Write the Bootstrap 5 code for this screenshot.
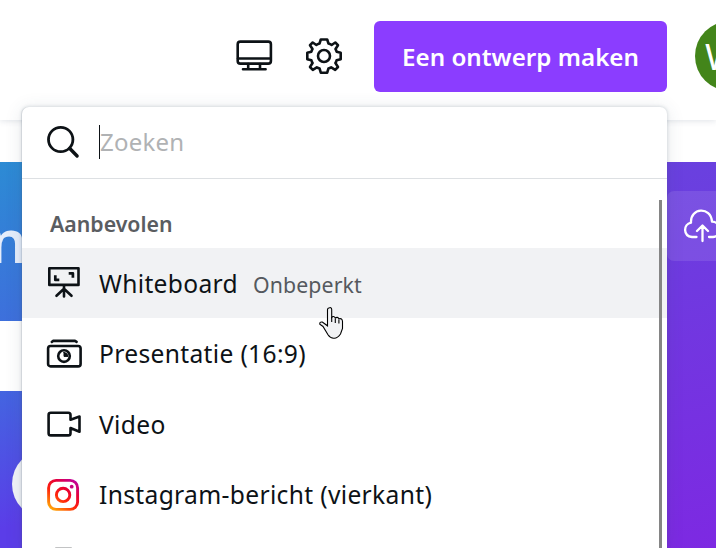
<!DOCTYPE html>
<html lang="nl">
<head>
<meta charset="utf-8">
<meta name="viewport" content="width=device-width, initial-scale=1">
<title>Een ontwerp maken</title>
<link href="https://cdn.jsdelivr.net/npm/bootstrap@5.3.0/dist/css/bootstrap.min.css" rel="stylesheet">
<style>
body{font-family:"Noto Sans",sans-serif;color:#0d1216;width:716px;height:548px;line-height:1.4}
svg{display:block;flex:none;overflow:visible}
.ico{fill:none;stroke:#0d1216;stroke-width:2.6;stroke-linecap:round;stroke-linejoin:round}
.topbar{height:120px;padding:21px 0 28px 236px;box-shadow:0 1px 6px rgba(64,79,109,.16);z-index:1}
.tools{gap:33px;width:138px;height:70px}
.create{width:293px;height:71px;background:#8b3dff;border-radius:6px;font-size:24.2px;font-weight:600;color:#fff;white-space:nowrap;padding:2px 0 0}
.create:hover{background:#8b3dff;color:#fff}
.avatar{width:70px;height:70px;margin-left:28px;background:#43851a;color:#fff;font-size:37px;padding-left:10px}
.stage{height:428px;padding-top:42px}
.leftcol{width:22px}
.banner{height:159px;background:linear-gradient(170deg,#2c8bd4,#3e6fdc);color:#e5edfb;font-size:59px;font-weight:600;line-height:1;padding-top:49px}
.banner span{margin-right:-5px}
.hero{height:157px;margin-top:70px;padding:58px 0 0 12px;background:linear-gradient(165deg,#4365e0,#5b3de8 85%)}
.disc{width:70px;height:70px;background:#f1f3f8}
.rightcol{width:49px;padding-top:29px;background:linear-gradient(165deg,#6941df,#7d29e2)}
.upload{height:70px;padding-left:17px;background:rgba(255,255,255,.1);border-radius:7px 0 0 7px}
.panel{left:22px;top:107px;width:645px;height:441px;border-radius:7px 7px 0 0;z-index:3;box-shadow:-1px 0 0 rgba(64,87,109,.1),0 0 3px 1px rgba(64,87,109,.15),0 2px 18px rgba(57,76,96,.13)}
.search{height:72px;padding-left:25px;border-bottom:1px solid #dde0e3}
.field{height:34px;border-left:1px solid #0d1216;margin-left:19px;margin-top:-2px;font-size:24px;letter-spacing:.2px;color:#b0b2b4}
.heading{height:69px;padding:30px 0 0 28px;font-size:21.3px;font-weight:600;color:#5a5d61}
.item{height:70.5px;padding:2px 0 0 25px;font-size:24.6px;letter-spacing:.33px;white-space:nowrap}
.item svg{width:34px;margin-right:18px}
.item.active-row{height:70px;background:#f1f2f4}
.item.active-row svg{margin-top:-2px}
.hint{font-size:21.3px;color:#55595e;margin-left:15px;padding-top:2px;letter-spacing:.1px}
.scroll{left:637px;top:93px;width:3px;height:348px;background:#858585}
.pointer{left:319px;top:307px;z-index:4}
</style>
</head>
<body class="overflow-hidden bg-white position-relative">
<header class="topbar d-flex position-relative bg-white overflow-x-clip">
  <div class="tools d-flex align-items-center flex-shrink-0">
    <svg class="ico" width="37" height="36" viewBox="0 0 37 36"><rect x="1.7" y="3.6" width="33.2" height="22" rx="2.7"/><path d="M2 20.5h32.6M12.2 26v5M24 26v5M7 31.2h22.6"/></svg>
    <svg class="ico" width="36" height="36" viewBox="-18 -18 36 36"><path d="M-3.2-16.5H3.2L4.5-12.4Q6.3-11.8 7.6-11L11.3-13.5 14-10.8 11.5-7Q12.2-5.8 12.6-4.3L16.7-3.2V3.2L12.6 4.3Q12.2 5.8 11.4 7L14 11 11.2 13.8 7.2 11.4Q5.9 12.2 4.4 12.6L3.2 16.7H-3.2L-4.4 12.6Q-5.9 12.2-7.2 11.4L-11.2 13.8-14 11-11.4 7Q-12.2 5.8-12.6 4.3L-16.7 3.2V-3.2L-12.6-4.3Q-12.2-5.8-11.5-7L-14-10.8-11.3-13.5-7.6-11Q-6.3-11.8-4.5-12.4Z"/><circle r="6"/></svg>
  </div>
  <button class="btn border-0 create flex-shrink-0">Een ontwerp maken</button>
  <div class="avatar rounded-circle flex-shrink-0 d-flex align-items-center">W</div>
</header>
<main class="stage d-flex justify-content-between">
  <div class="leftcol overflow-hidden">
    <div class="banner d-flex justify-content-end"><span>n</span></div>
    <div class="hero"><div class="disc rounded-circle"></div></div>
  </div>
  <div class="rightcol overflow-hidden">
    <div class="upload d-flex align-items-center">
      <svg width="36" height="34" viewBox="0 0 36 34" fill="none" stroke="#fff" stroke-width="2.3" stroke-linecap="round" stroke-linejoin="round"><path d="M12.5 28H8C-1 27-1 15.5 7 13.7 6-1.5 27-3 28 12.7 37.5 13 39 27 29 28h-4M18.5 32V17M13 22l5.5-5.5L24 22"/></svg>
    </div>
  </div>
</main>
<section class="panel position-absolute bg-white overflow-hidden">
  <div class="search d-flex align-items-center">
    <svg class="ico" width="33" height="34" viewBox="0 0 33 34"><circle cx="13.7" cy="13.5" r="12.2" stroke-width="2.8"/><path d="M22.8 22.5l7.3 7.5" stroke-width="3.4"/></svg>
    <div class="field d-flex align-items-center">Zoeken</div>
  </div>
  <div class="heading">Aanbevolen</div>
  <div class="item active-row d-flex align-items-center">
    <svg class="ico" height="34" viewBox="0 0 34 34"><path d="M2.3 2.2h29.2v16.7H2.3zM17 19v11.5M17 22.8l-7.5 7M17 22.8l7.5 7"/><path d="M8.3 9.3v4.6h4M21.7 7.3h4.2v4.4" stroke-width="2.7" stroke-linecap="butt"/></svg>
    <span class="name">Whiteboard</span><span class="hint">Onbeperkt</span>
  </div>
  <div class="item d-flex align-items-center">
    <svg class="ico" height="34" viewBox="0 0 34 34"><path d="M4.8 4.9 6 3.9H28l1.6 1"/><rect x="1.1" y="9" width="32.5" height="20.4" rx="2.5"/><circle cx="17" cy="19.1" r="5.8"/><path d="M17 15.4v4h4q-.3-3.7-4-4Z" fill="#0d1216" stroke-width="1"/></svg>
    <span class="name">Presentatie (16:9)</span>
  </div>
  <div class="item d-flex align-items-center">
    <svg class="ico" height="34" viewBox="0 0 34 34"><path d="M3.8 4.7h17.5q2.2 0 2.2 2.2v4.8l9-3.2v15.3l-9-3.8v5.2q0 2.2-2.2 2.2H3.8q-2.2 0-2.2-2.2V6.9q0-2.2 2.2-2.2Z"/></svg>
    <span class="name">Video</span>
  </div>
  <div class="item d-flex align-items-center">
    <svg height="34" viewBox="0 0 34 34" fill="none" stroke="url(#insta)" stroke-width="2.9"><defs><linearGradient id="insta" gradientUnits="userSpaceOnUse" x1="5" y1="32" x2="27" y2="1"><stop stop-color="#ffaa08"/><stop offset=".4" stop-color="#ff240c"/><stop offset=".68" stop-color="#e70034"/><stop offset="1" stop-color="#bd00a2"/></linearGradient></defs><rect x="1.6" y="2.4" width="29" height="29" rx="7.5"/><circle cx="16.1" cy="16.9" r="6.7"/><circle cx="24.7" cy="8.7" r="1.9" fill="#c80082" stroke="none"/></svg>
    <span class="name">Instagram-bericht (vierkant)</span>
  </div>
  <div class="item d-flex align-items-center">
    <svg class="ico" height="34" viewBox="0 0 34 34"><rect x="6" y="0" width="21" height="34" rx="3"/></svg>
  </div>
  <div class="scroll position-absolute"></div>
</section>
<svg class="pointer position-absolute" width="24" height="32" viewBox="0 0 24 32"><path d="M10.5.8q2-.6 2.2 1.7v8q1.8-2.3 3.6.5 2.2-1.6 3.6.8 3.4-1 3.6 2.7v7l-2 5.5q-3 4.4-6.5 4.2-3.5.2-6-3.5L4 19.5.8 17.3q-.4-2.7 2.5-2.3l5.2 3.8V2.5q0-1.4 2-1.7Z" fill="#f1f2f4" stroke="#000" stroke-width="1.1"/><path d="M12.7 10v5M16.3 11.5v4.5M19.9 12.5v4" fill="none" stroke="#000" stroke-width="1.1"/></svg>
<script src="https://cdn.jsdelivr.net/npm/bootstrap@5.3.0/dist/js/bootstrap.bundle.min.js"></script>
</body>
</html>
